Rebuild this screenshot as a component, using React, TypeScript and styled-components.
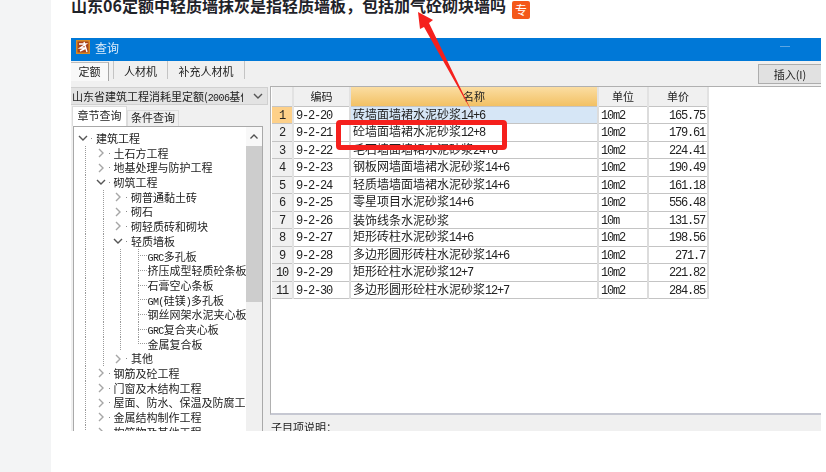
import React from "react";
import styled, { createGlobalStyle } from "styled-components";

const Global = createGlobalStyle`
  html, body { margin: 0; padding: 0; background: #fff; overflow: hidden; }
  body { font-family: "Noto Sans CJK SC", "Liberation Sans", sans-serif; }
`;

const Page = styled.div`
  position: relative;
  display: flex;
  width: 826px;
  height: 472px;
  overflow: hidden;
  background: #fff;
`;
const Gutter = styled.div`
  width: 51px;
  flex: none;
  background: #f3f4f5;
`;
const Main = styled.main`
  flex: 1;
  padding-left: 20px;
  display: flex;
  flex-direction: column;
  align-items: flex-start;
`;
const TitleRow = styled.div`
  height: 38px;
  display: flex;
  align-items: flex-start;
  gap: 6px;
`;
const Title = styled.h1`
  margin: -5px 0 0;
  font-size: 16px;
  line-height: 20px;
  font-weight: 700;
  color: #1f2329;
  white-space: nowrap;
`;
const Badge = styled.span`
  margin-top: 1px;
  width: 18px;
  height: 18px;
  border-radius: 2px;
  background: #f4581a;
  color: #fff;
  font-size: 12px;
  line-height: 18px;
  text-align: center;
`;
const Win = styled.section`
  width: 750px;
  height: 393px;
  overflow: hidden;
  background: #f0f0f0;
  color: #222;
  font-size: 11px;
  filter: blur(0.3px);
  display: flex;
  flex-direction: column;
`;
const TitleBar = styled.header`
  height: 23px;
  flex: none;
  box-sizing: border-box;
  padding: 0 0 5px 5px;
  background: #0078d7;
  display: flex;
  align-items: center;
  gap: 5px;
  color: #dcecfa;
  font-size: 12px;
  position: relative;
`;
const Minimize = styled.span`
  position: absolute;
  left: 709px;
  top: 8px;
  width: 10px;
  height: 1px;
  background: #5aa5e3;
`;
const Toolbar = styled.div`
  height: 25px;
  flex: none;
  display: flex;
  align-items: flex-start;
`;
const TabBtn = styled.div<{ $w: number; $active?: boolean }>`
  width: ${(p) => p.$w}px;
  height: 18px;
  margin-top: ${(p) => (p.$active ? 1 : 0)}px;
  line-height: ${(p) => (p.$active ? 16 : 20)}px;
  text-align: center;
  border-right: 1px solid ${(p) => (p.$active ? "#a5a5a5" : "#c4c4c4")};
  background: ${(p) => (p.$active ? "#f8f8f8" : "transparent")};
  border-top: ${(p) => (p.$active ? "1px solid #bdbdbd" : "none")};
  margin-right: ${(p) => (p.$active ? 5 : 0)}px;
  box-shadow: ${(p) => (p.$active ? "none" : "-1px 0 0 #c4c4c4")};
`;
const InsertBtn = styled.button`
  margin: 3px 0 0 auto;
  width: 63px;
  height: 20px;
  padding: 0 0 1px;
  border: 1px solid #adadad;
  border-right: none;
  background: #e1e1e1;
  font: inherit;
  font-size: 11px;
  line-height: 16px;
  color: #222;
`;
const Body = styled.div`
  flex: 1;
  min-height: 0;
  display: flex;
`;
const LeftPanel = styled.aside`
  width: 199px;
  flex: none;
  display: flex;
  flex-direction: column;
`;
const Combo = styled.div`
  width: 197px;
  height: 18px;
  margin-top: 1px;
  box-sizing: border-box;
  flex: none;
  display: flex;
  align-items: center;
  padding: 0 3px 0 1px;
  background: #e3e3e3;
  border: 1px solid #d0d0d0;
  border-left: none;
  white-space: nowrap;
`;
const ComboText = styled.span`
  flex: 1;
  min-width: 0;
  margin-right: 9px;
  overflow: hidden;
`;
const SubTabs = styled.div`
  height: 21px;
  flex: none;
  display: flex;
  align-items: flex-end;
  padding-left: 1px;
`;
const SubTab = styled.div<{ $active?: boolean }>`
  width: ${(p) => (p.$active ? 55 : 52)}px;
  height: ${(p) => (p.$active ? 20 : 16)}px;
  box-sizing: border-box;
  text-align: center;
  line-height: ${(p) => (p.$active ? 16 : 13)}px;
  background: ${(p) => (p.$active ? "#fff" : "#f0f0f0")};
  border: 1px solid #dcdcdc;
  border-bottom: none;
`;
const TreeBox = styled.div`
  flex: 1;
  margin: 0 7px 0 2px;
  min-height: 0;
  display: flex;
  background: #fff;
  border: 1px solid #a9a9a9;
  border-bottom: none;
  overflow: hidden;
`;
const TreeList = styled.ul`
  flex: 1;
  min-width: 0;
  margin: 0;
  padding: 4px 0 0 3px;
  list-style: none;
  overflow: hidden;
`;
const TreeRow = styled.li`
  display: flex;
  height: 14.7px;
  line-height: 14.7px;
  white-space: nowrap;
  font-size: 11px;
`;
const Guide = styled.span`
  flex: none;
  width: 17.5px;
  background: repeating-linear-gradient(to bottom, #9a9a9a 0 1px, transparent 1px 2px) 8px 0 / 1px 100% no-repeat;
`;
const Toggle = styled.span`
  flex: none;
  width: 19px;
  height: 100%;
  display: flex;
  align-items: center;
  &::after {
    content: "";
    width: 1px;
    height: 1px;
    margin-left: 2px;
    background: #8a8a8a;
  }
`;
const Leaf = styled.span<{ $last?: boolean }>`
  flex: none;
  width: 18px;
  height: 100%;
  background:
    repeating-linear-gradient(to bottom, #9a9a9a 0 1px, transparent 1px 2px) 8px 0 / 1px ${(p) => (p.$last ? "50%" : "100%")} no-repeat,
    repeating-linear-gradient(to right, #9a9a9a 0 1px, transparent 1px 2px) 8px 50% / 9px 1px no-repeat;
`;
const ScrollBar = styled.div`
  width: 16px;
  flex: none;
  background: #f0f0f0;
  display: flex;
  flex-direction: column;
  align-items: center;
`;
const ScrollUp = styled.div`
  height: 19px;
  flex: none;
  display: flex;
  align-items: center;
  background: #f8f8f8;
  width: 100%;
  justify-content: center;
`;
const ScrollThumb = styled.div`
  width: 100%;
  height: 156px;
  background: #cdcdcd;
`;
const RightPanel = styled.div`
  flex: 1;
  min-width: 0;
  display: flex;
  flex-direction: column;
`;
const TableArea = styled.div`
  height: 329px;
  flex: none;
  box-sizing: border-box;
  background: #fff;
  border-top: 1px solid #b0b0b0;
  border-left: 1px solid #b0b0b0;
  border-bottom: 2px solid #c6c8d2;
  padding-left: 1px;
`;
const Grid = styled.table`
  border-collapse: collapse;
  table-layout: fixed;
  width: 436px;
  font-size: 12px;
`;
const DataRow = styled.tr<{ $h: number }>`
  height: ${(p) => p.$h}px;
`;
const HeadCell = styled.th<{ $selected?: boolean }>`
  padding: 0;
  font-size: 11px;
  line-height: 12px;
  font-weight: 400;
  text-align: center;
  background: ${(p) => (p.$selected ? "linear-gradient(#fbdda2, #f2c164)" : "#f0f0f0")};
  border-right: 2px solid #e2e2e2;
  border-bottom: 1px solid #c4c4c4;
`;
const RowHead = styled.td<{ $selected?: boolean }>`
  padding: 0;
  line-height: 12px;
  text-align: center;
  background: ${(p) => (p.$selected ? "#fdd089" : "#f0f0f0")};
  border-right: 2px solid #e2e2e2;
  border-bottom: 1px solid #c4c4c4;
`;
const Cell = styled.td<{ $right?: boolean; $selected?: boolean }>`
  padding: ${(p) => (p.$right ? "0 2px 0 0" : "0 0 0 2px")};
  line-height: 12px;
  text-align: ${(p) => (p.$right ? "right" : "left")};
  background: ${(p) => (p.$selected ? "#d6e6f6" : "#fff")};
  border-right: 2px solid #dcdcdc;
  border-bottom: 1px solid #c4c4c4;
  white-space: nowrap;
  overflow: hidden;
`;
const Latin = styled.span`
  font-family: "Liberation Mono", monospace;
  font-size: 12px;
  line-height: 12px;
  letter-spacing: -1.2px;
`;
const TreeLatin = styled.span`
  font-family: "Liberation Mono", monospace;
  font-size: 10px;
  letter-spacing: -0.6px;
`;
const Note = styled.div`
  padding: 4px 0 0 1px;
  font-size: 11px;
  line-height: 16px;
`;
const Overlay = styled.svg`
  position: absolute;
  left: 0;
  top: 0;
  pointer-events: none;
`;
const RedBox = styled.div`
  position: absolute;
  left: 336px;
  top: 120px;
  width: 171px;
  height: 30px;
  box-sizing: border-box;
  border: 5px solid #f5201d;
  border-radius: 4px;
`;

function Mixed({ text, small }: { text: string; small?: boolean }) {
  const parts = text.split(/([\x21-\x7e]+)/).filter(Boolean);
  const L = small ? TreeLatin : Latin;
  return (
    <>
      {parts.map((p, i) =>
        /^[\x21-\x7e]+$/.test(p) ? <L key={i}>{p}</L> : <React.Fragment key={i}>{p}</React.Fragment>
      )}
    </>
  );
}

const Chevron = ({ open }: { open?: boolean }) => (
  <svg width="12" height="12" viewBox="0 0 12 12" fill="none">
    <path d={open ? "M2 4l4 4 4-4" : "M4 2l4 4-4 4"} stroke={open ? "#555" : "#a6a6a6"} strokeWidth={1.4} />
  </svg>
);

type Node = { t: string; d: number; k: "open" | "closed" | "leaf" | "last" };
const nodes: Node[] = [
  { t: "建筑工程", d: 0, k: "open" },
  { t: "土石方工程", d: 1, k: "closed" },
  { t: "地基处理与防护工程", d: 1, k: "closed" },
  { t: "砌筑工程", d: 1, k: "open" },
  { t: "砌普通黏土砖", d: 2, k: "closed" },
  { t: "砌石", d: 2, k: "closed" },
  { t: "砌轻质砖和砌块", d: 2, k: "closed" },
  { t: "轻质墙板", d: 2, k: "open" },
  { t: "GRC多孔板", d: 3, k: "leaf" },
  { t: "挤压成型轻质砼条板", d: 3, k: "leaf" },
  { t: "石膏空心条板", d: 3, k: "leaf" },
  { t: "GM(硅镁)多孔板", d: 3, k: "leaf" },
  { t: "钢丝网架水泥夹心板", d: 3, k: "leaf" },
  { t: "GRC复合夹心板", d: 3, k: "leaf" },
  { t: "金属复合板", d: 3, k: "last" },
  { t: "其他", d: 2, k: "closed" },
  { t: "钢筋及砼工程", d: 1, k: "closed" },
  { t: "门窗及木结构工程", d: 1, k: "closed" },
  { t: "屋面、防水、保温及防腐工程", d: 1, k: "closed" },
  { t: "金属结构制作工程", d: 1, k: "closed" },
  { t: "构筑物及其他工程", d: 1, k: "closed" },
];

const rows = [
  ["9-2-20", "砖墙面墙裙水泥砂浆14+6", "10m2", "165.75"],
  ["9-2-21", "砼墙面墙裙水泥砂浆12+8", "10m2", "179.61"],
  ["9-2-22", "毛石墙面墙裙水泥砂浆24+6", "10m2", "224.41"],
  ["9-2-23", "钢板网墙面墙裙水泥砂浆14+6", "10m2", "190.49"],
  ["9-2-24", "轻质墙墙面墙裙水泥砂浆14+6", "10m2", "161.18"],
  ["9-2-25", "零星项目水泥砂浆14+6", "10m2", "556.48"],
  ["9-2-26", "装饰线条水泥砂浆", "10m", "131.57"],
  ["9-2-27", "矩形砖柱水泥砂浆14+6", "10m2", "198.56"],
  ["9-2-28", "多边形圆形砖柱水泥砂浆14+6", "10m2", "271.7"],
  ["9-2-29", "矩形砼柱水泥砂浆12+7", "10m2", "221.82"],
  ["9-2-30", "多边形圆形砼柱水泥砂浆12+7", "10m2", "284.85"],
];

export default function App() {
  return (
    <Page>
      <Global />
      <Gutter />
      <Main>
        <TitleRow>
          <Title>山东06定额中轻质墙抹灰是指轻质墙板，包括加气砼砌块墙吗</Title>
          <Badge>专</Badge>
        </TitleRow>
        <Win>
          <TitleBar>
            <svg width="14" height="14" viewBox="0 0 14 14">
              <rect width="14" height="14" fill="#d98a24" />
              <rect x="1.5" y="1.5" width="11" height="11" fill="#a8431c" />
              <path d="M3 4h7L4 8h6l-6 3M8 2l3 10" stroke="#fff" strokeWidth="1.4" fill="none" />
            </svg>
            查询
            <Minimize />
          </TitleBar>
          <Toolbar>
            <TabBtn $w={37} $active>定额</TabBtn>
            <TabBtn $w={53}>人材机</TabBtn>
            <TabBtn $w={76}>补充人材机</TabBtn>
            <InsertBtn>插入(I)</InsertBtn>
          </Toolbar>
          <Body>
            <LeftPanel>
              <Combo>
                <ComboText>山东省建筑工程消耗里定额(<TreeLatin>2006</TreeLatin>基价</ComboText>
                <Chevron open />
              </Combo>
              <SubTabs>
                <SubTab $active>章节查询</SubTab>
                <SubTab>条件查询</SubTab>
              </SubTabs>
              <TreeBox>
                <TreeList>
                  {nodes.map((n) => (
                    <TreeRow key={n.t}>
                      {Array.from({ length: n.d }, (_, i) => (
                        <Guide key={i} />
                      ))}
                      {n.k === "leaf" || n.k === "last" ? (
                        <Leaf $last={n.k === "last"} />
                      ) : (
                        <Toggle>
                          <Chevron open={n.k === "open"} />
                        </Toggle>
                      )}
                      <span>
                        <Mixed text={n.t} small />
                      </span>
                    </TreeRow>
                  ))}
                </TreeList>
                <ScrollBar>
                  <ScrollUp>
                    <svg width="10" height="8" viewBox="0 0 10 8" fill="none">
                      <path d="M1.5 5.5L5 2l3.5 3.5" stroke="#505050" strokeWidth="1.3" />
                    </svg>
                  </ScrollUp>
                  <ScrollThumb />
                </ScrollBar>
              </TreeBox>
            </LeftPanel>
            <RightPanel>
              <TableArea>
                <Grid>
                  <colgroup>
                    <col width="21" />
                    <col width="57" />
                    <col width="248" />
                    <col width="50" />
                    <col width="60" />
                  </colgroup>
                  <thead>
                    <DataRow $h={19}>
                      <HeadCell />
                      <HeadCell>编码</HeadCell>
                      <HeadCell $selected>名称</HeadCell>
                      <HeadCell>单位</HeadCell>
                      <HeadCell>单价</HeadCell>
                    </DataRow>
                  </thead>
                  <tbody>
                    {rows.map((r, i) => (
                      <DataRow key={r[0]} $h={i % 2 === 0 ? 17 : 18}>
                        <RowHead $selected={i === 0}>
                          <Latin>{i + 1}</Latin>
                        </RowHead>
                        <Cell><Latin>{r[0]}</Latin></Cell>
                        <Cell $selected={i === 0}><Mixed text={r[1]} /></Cell>
                        <Cell><Latin>{r[2]}</Latin></Cell>
                        <Cell $right><Latin>{r[3]}</Latin></Cell>
                      </DataRow>
                    ))}
                  </tbody>
                </Grid>
              </TableArea>
              <Note>子目项说明：</Note>
            </RightPanel>
          </Body>
        </Win>
      </Main>
      <Overlay width="826" height="472" viewBox="0 0 826 472">
        <polygon points="418,12 433,20 429,23 472,112 424,27 420,29" fill="#f5201d" />
      </Overlay>
      <RedBox />
    </Page>
  );
}
